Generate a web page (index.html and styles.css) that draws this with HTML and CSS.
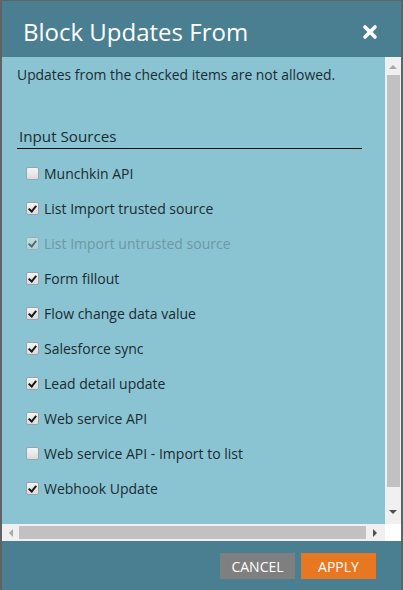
FILE: index.html
```html
<!DOCTYPE html>
<html>
<head>
<meta charset="utf-8">
<link rel="stylesheet" href="styles.css">
</head>
<body>
<div class="dialog">
  <header class="hd">
    <h1 class="title">Block Updates From</h1>
    <span class="close" aria-label="Close">
      <svg width="16" height="16" viewBox="0 0 16 16"><path d="M3 3 L13 13 M13 3 L3 13" stroke="#fff" stroke-width="3.6" stroke-linecap="round"/></svg>
    </span>
  </header>
  <div class="viewport">
    <div class="content">
      <p class="msg">Updates from the checked items are not allowed.</p>
      <div class="legend">Input Sources</div>
      <ul class="list">
        <li class="row"><span class="cb"></span><span class="lbl">Munchkin API</span></li>
        <li class="row"><span class="cb on"></span><span class="lbl">List Import trusted source</span></li>
        <li class="row dis"><span class="cb on"></span><span class="lbl">List Import untrusted source</span></li>
        <li class="row"><span class="cb on"></span><span class="lbl">Form fillout</span></li>
        <li class="row"><span class="cb on"></span><span class="lbl">Flow change data value</span></li>
        <li class="row"><span class="cb on"></span><span class="lbl">Salesforce sync</span></li>
        <li class="row"><span class="cb on"></span><span class="lbl">Lead detail update</span></li>
        <li class="row"><span class="cb on"></span><span class="lbl">Web service API</span></li>
        <li class="row"><span class="cb"></span><span class="lbl">Web service API - Import to list</span></li>
        <li class="row"><span class="cb on"></span><span class="lbl">Webhook Update</span></li>
      </ul>
    </div>
    <div class="vscroll">
      <span class="arr"><svg width="8" height="5" viewBox="0 0 8 5"><path d="M0 5 L4 1 L8 5Z" fill="#a8a8a8"/></svg></span>
      <span class="vthumb"></span>
      <span class="arr end"><svg width="8" height="5" viewBox="0 0 8 5"><path d="M0 0 L4 4 L8 0Z" fill="#505050"/></svg></span>
    </div>
    <div class="hscroll">
      <span class="harr"><svg width="5" height="8" viewBox="0 0 5 8"><path d="M5 0 L1 4 L5 8Z" fill="#a8a8a8"/></svg></span>
      <span class="hthumb"></span>
      <span class="harr"><svg width="5" height="8" viewBox="0 0 5 8"><path d="M0 0 L4 4 L0 8Z" fill="#505050"/></svg></span>
    </div>
    <div class="corner"></div>
  </div>
  <footer class="ft">
    <button class="btn cancel">CANCEL</button>
    <button class="btn apply">APPLY</button>
  </footer>
</div>
</body>
</html>
```
FILE: styles.css
```css
html, body {
  margin: 0;
  padding: 0;
  background: #5e6466;
}
body {
  font-family: "Open Sans", "DejaVu Sans", sans-serif;
  padding-top: 1px;
}
.dialog {
  margin-left: 2px;
  width: 399px;
  height: 589px;
  display: flex;
  flex-direction: column;
  background: #497f90;
}
.hd {
  height: 56px;
  box-sizing: border-box;
  display: flex;
  align-items: center;
  justify-content: space-between;
  padding: 8px 23px 0 21px;
  flex: none;
}
.title {
  margin: 0;
  font-size: 24px;
  font-weight: 400;
  color: #fff;
  line-height: 30px;
  padding-bottom: 2px;
}
.close {
  display: flex;
  width: 16px;
  height: 16px;
  margin-bottom: 2px;
}
.viewport {
  flex: none;
  height: 484px;
  display: grid;
  grid-template-columns: 383px 16px;
  grid-template-rows: 467px 17px;
  background: #f0f0f0;
}
.content {
  background: #8ac4d3;
  padding: 9px 0 0 15px;
  overflow: hidden;
  color: #1b2b31;
}
.msg {
  margin: 0;
  font-size: 13.9px;
  line-height: 18px;
}
.legend {
  margin-top: 42px;
  width: 345px;
  font-size: 15.2px;
  line-height: 20px;
  padding: 0 0 2px 2px;
  box-sizing: border-box;
  border-bottom: 1px solid #111;
  height: 23px;
}
.list {
  list-style: none;
  margin: 7px 0 0 0;
  padding: 0 0 0 9px;
}
.row {
  height: 35px;
  display: flex;
  align-items: center;
  font-size: 14px;
}
.cb {
  width: 11px;
  height: 11px;
  border: 1px solid #9aa4a8;
  border-radius: 2px;
  background: linear-gradient(#f4f4f4, #dcdcdc);
  margin-right: 5px;
  position: relative;
  flex: none;
}
.cb.on::after {
  content: "";
  position: absolute;
  left: 3px;
  top: 1px;
  width: 3px;
  height: 6px;
  border: solid #1a1a1a;
  border-width: 0 2px 2px 0;
  transform: rotate(40deg);
}
.row.dis .lbl {
  color: #6f97a4;
}
.row.dis .cb {
  opacity: 0.5;
}
.vscroll {
  background: #f0f0f0;
  display: flex;
  flex-direction: column;
  align-items: center;
}
.arr {
  height: 18px;
  width: 16px;
  display: flex;
  align-items: center;
  justify-content: center;
  flex: none;
}
.arr.end {
  margin-top: auto;
  height: 20px;
  padding-bottom: 4px;
  box-sizing: border-box;
}
.vthumb {
  width: 13px;
  height: 412px;
  background: #c1c1c1;
  flex: none;
}
.hscroll {
  background: #f0f0f0;
  display: flex;
  align-items: center;
}
.harr {
  width: 17px;
  height: 17px;
  display: flex;
  align-items: center;
  justify-content: center;
  flex: none;
}
.hthumb {
  width: 347px;
  height: 13px;
  background: #c1c1c1;
  flex: none;
}
.harr:last-child {
  width: 19px;
}
.corner {
  background: #fff;
}
.ft {
  flex: 1;
  display: flex;
  justify-content: flex-end;
  align-items: flex-start;
  gap: 6px;
  padding: 12px 25px 0 0;
}
.btn {
  width: 75px;
  height: 26px;
  border: none;
  color: #fff;
  font-family: "Open Sans", "DejaVu Sans", sans-serif;
  font-size: 14px;
  padding: 0;
  cursor: pointer;
}
.cancel {
  background: #7f7f7f;
}
.apply {
  background: #e87722;
}
```
